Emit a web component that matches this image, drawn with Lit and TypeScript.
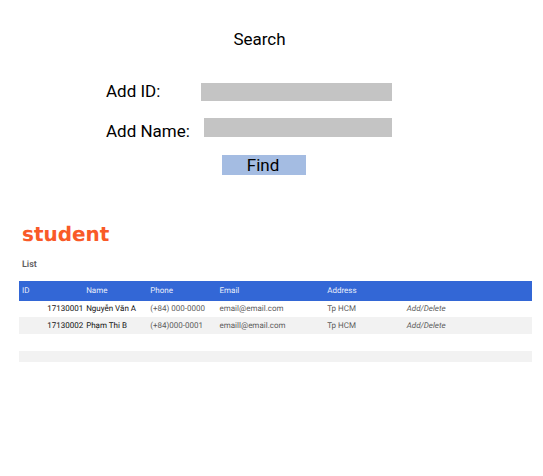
import { LitElement, html, css } from "lit";
import { customElement, state } from "lit/decorators.js";

interface Student {
  id: string;
  name: string;
  phone: string;
  email: string;
  address: string;
}

@customElement("search-form")
export class SearchForm extends LitElement {
  static styles = css`
    :host {
      display: block;
      font-size: 17px;
      line-height: 20px;
      color: #000;
    }
    .title {
      margin: 0 32px 0 0;
      font: inherit;
      text-align: center;
    }
    .form {
      display: flex;
      flex-direction: column;
      max-width: 286px;
      margin: 32px auto 0;
      padding-right: 53px;
    }
    .row {
      display: flex;
      justify-content: space-between;
    }
    .id-row {
      align-items: flex-end;
    }
    .name-row {
      margin-top: 17px;
      height: 23px;
    }
    .name-row label {
      align-self: flex-end;
    }
    .field {
      box-sizing: border-box;
      border: 0;
      border-radius: 0;
      margin: 0;
      padding: 0 4px;
      background: #c4c4c4;
      font: inherit;
      font-size: 14px;
    }
    .id-field {
      width: 191px;
      height: 18px;
    }
    .name-field {
      width: 188px;
      height: 19px;
    }
    .find {
      align-self: center;
      width: 84px;
      height: 20px;
      margin: 14px 0 0 30px;
      padding: 0 2px 0 0;
      border: 0;
      background: #a4bce2;
      color: inherit;
      font: inherit;
    }
  `;

  render() {
    return html`
      <h1 class="title">Search</h1>
      <form class="form" @submit=${(e: Event) => e.preventDefault()}>
        <div class="row id-row">
          <label for="student-id">Add ID:</label>
          <input class="field id-field" id="student-id" type="text" />
        </div>
        <div class="row name-row">
          <label for="student-name">Add Name:</label>
          <input class="field name-field" id="student-name" type="text" />
        </div>
        <button class="find" type="submit">Find</button>
      </form>
    `;
  }
}

@customElement("student-list")
export class StudentList extends LitElement {
  static styles = css`
    :host {
      display: block;
      color: #5c5c5c;
      text-rendering: geometricPrecision;
    }
    .heading {
      margin: 0 3px;
      font: bold 20px/24px "DejaVu Sans", sans-serif;
      color: #f95a28;
    }
    .caption {
      margin: 13px 3px 0;
      font-size: 9px;
      line-height: 12px;
      font-weight: 600;
    }
    .table {
      width: 100%;
      margin-top: 10px;
      border-collapse: collapse;
      table-layout: fixed;
      font-size: 8px;
      line-height: 10px;
    }
    .c-id, .c-name {
      width: 12.5%;
    }
    .c-phone {
      width: 13.5%;
    }
    .c-email {
      width: 21%;
    }
    .c-address {
      width: 15.5%;
    }
    th, td {
      padding: 0 1px 0 3px;
      text-align: left;
      font-weight: 400;
      white-space: nowrap;
    }
    thead tr {
      height: 20px;
      background: #3367d6;
      color: #e8eefb;
    }
    th {
      padding-bottom: 1px;
    }
    tbody tr {
      height: 17px;
    }
    tbody tr:first-child {
      height: 16px;
    }
    tbody tr:nth-child(even) {
      background: #f2f2f2;
    }
    tbody .last {
      height: 11px;
    }
    .id {
      padding-right: 0;
      text-align: right;
      color: #111;
    }
    .name {
      color: #111;
    }
    .action {
      font-style: italic;
    }
    .link {
      color: inherit;
      text-decoration: none;
    }
  `;

  @state() private students: Student[] = [
    { id: "17130001", name: "Nguyễn Văn A", phone: "(+84) 000-0000", email: "email@email.com", address: "Tp HCM" },
    { id: "17130002", name: "Phạm Thi B", phone: "(+84)000-0001", email: "emaill@email.com", address: "Tp HCM" },
  ];

  render() {
    return html`
      <h2 class="heading">student</h2>
      <p class="caption">List</p>
      <table class="table">
        <colgroup>
          <col class="c-id" /><col class="c-name" /><col class="c-phone" />
          <col class="c-email" /><col class="c-address" /><col />
        </colgroup>
        <thead>
          <tr>
            <th>ID</th><th>Name</th><th>Phone</th><th>Email</th><th>Address</th><th></th>
          </tr>
        </thead>
        <tbody>
          ${this.students.map(
            (s) => html`<tr>
              <td class="id">${s.id}</td>
              <td class="name">${s.name}</td>
              <td>${s.phone}</td>
              <td>${s.email}</td>
              <td>${s.address}</td>
              <td class="action"><a class="link" href="#">Add/Delete</a></td>
            </tr>`
          )}
          <tr><td colspan="6"></td></tr>
          <tr class="last"><td colspan="6"></td></tr>
        </tbody>
      </table>
    `;
  }
}

@customElement("app-root")
export class AppRoot extends LitElement {
  static styles = css`
    :host {
      display: block;
      background: #fff;
      font-family: Roboto, sans-serif;
    }
    .page {
      padding: 29px 11px 40px 19px;
    }
    .list {
      margin-top: 47px;
    }
  `;

  render() {
    return html`
      <main class="page">
        <search-form></search-form>
        <student-list class="list"></student-list>
      </main>
    `;
  }
}
